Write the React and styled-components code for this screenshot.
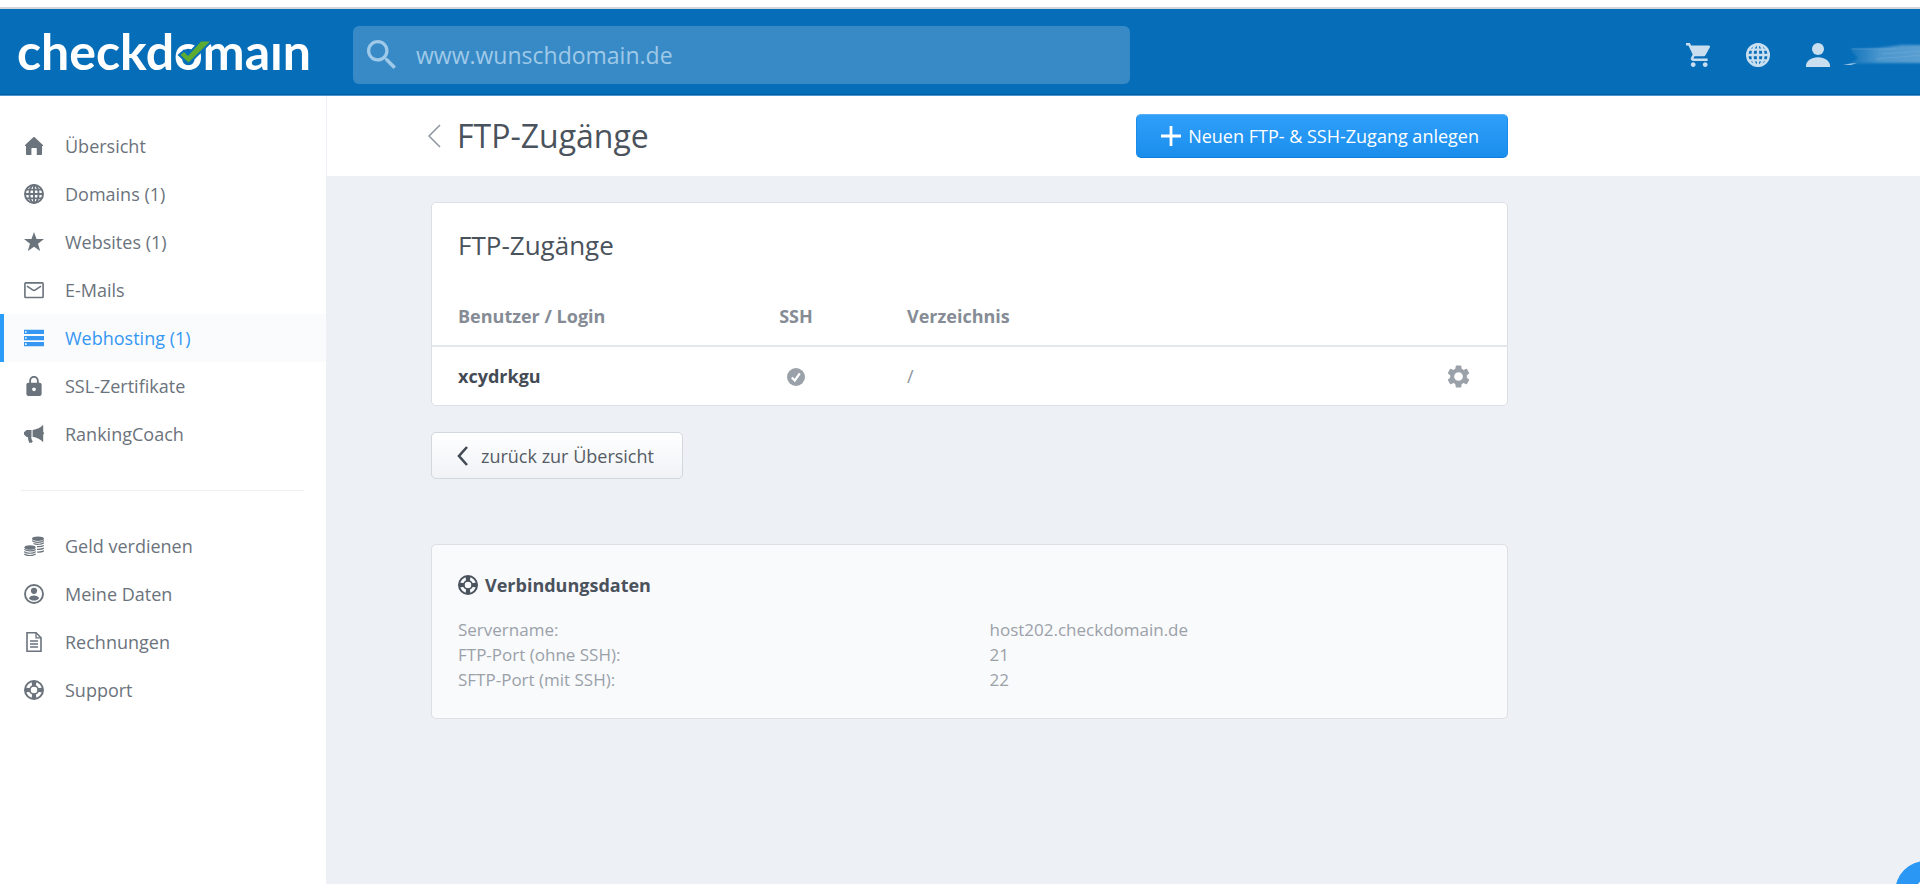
import React from "react";
import styled, { createGlobalStyle } from "styled-components";

const GlobalStyle = createGlobalStyle`
  * {
    box-sizing: border-box;
  }
  body {
    margin: 0;
    background: #edf0f5;
    color: #6b737c;
    font-family: "Open Sans", "Noto Sans", sans-serif;
    font-size: 18px;
    line-height: 24px;
  }
`;

const Page = styled.div`
  display: flex;
  flex-direction: column;
  min-height: 100vh;
  padding-top: 7px;
  background: #fff;
`;

const Topbar = styled.header`
  display: flex;
  align-items: center;
  height: 89px;
  padding-top: 5px;
  border-top: 2px solid #d3d6db;
  border-bottom: 1px solid #4a97d0;
  background: #066eb8;
  box-shadow: inset 0 -1px 0 #0560a4;
`;

const LogoLink = styled.a`
  flex: none;
  width: 353px;
  padding-left: 16px;
  line-height: 0;
`;

const LogoText = styled.text`
  fill: #fff;
  font-family: Lato, sans-serif;
  font-size: 50px;
  font-weight: 700;
`;

const Search = styled.label`
  display: flex;
  align-items: center;
  gap: 20px;
  flex: 0 1 777px;
  height: 58px;
  padding: 0 14px;
  border-radius: 6px;
  background: #388ac6;
  color: #9fc9e8;
`;

const SearchInput = styled.input`
  flex: 1;
  min-width: 0;
  padding: 0;
  border: 0;
  outline: 0;
  background: none;
  color: #fff;
  font: inherit;
  font-size: 23px;
  &::placeholder {
    color: #9fc9e8;
    opacity: 1;
  }
`;

const TopActions = styled.div`
  display: flex;
  align-items: center;
  gap: 36px;
  margin-left: auto;
`;

const IconButton = styled.button`
  display: flex;
  align-items: center;
  padding: 0;
  border: 0;
  background: none;
  color: ${(props) => props.$color || "#c9dff0"};
  cursor: pointer;
`;

const UserButton = styled(IconButton)`
  gap: 12px;
`;

const Body = styled.div`
  display: flex;
  flex: 1;
`;

const Sidebar = styled.nav`
  flex: none;
  width: 327px;
  padding-top: 26px;
  border-right: 1px solid #edf0f5;
`;

const NavList = styled.ul`
  margin: 0;
  padding: 0;
  list-style: none;
`;

const NavLink = styled.a`
  display: flex;
  align-items: center;
  gap: 21px;
  height: 48px;
  padding-left: 20px;
  border-left: 4px solid ${(props) => (props.$active ? "#2b9cf7" : "transparent")};
  background: ${(props) => (props.$active ? "#fafbfc" : "none")};
  color: ${(props) => (props.$active ? "#3597f2" : "#6b737c")};
  text-decoration: none;
`;

const Divider = styled.hr`
  height: 1px;
  margin: 32px 22px 31px 21px;
  border: 0;
  background: #edeff2;
`;

const Main = styled.main`
  flex: 1;
  min-width: 0;
  background: #edf0f5;
`;

const PageHead = styled.div`
  padding: 0 24px 0 101px;
  background: #fff;
`;

const PageHeadInner = styled.div`
  display: flex;
  align-items: center;
  justify-content: space-between;
  max-width: 1080px;
  height: 80px;
`;

const PageTitle = styled.h1`
  display: flex;
  align-items: center;
  gap: 16px;
  margin: 0;
  color: #4a525c;
  font-size: 32px;
  font-weight: 400;
  line-height: 44px;
`;

const BackLink = styled.a`
  display: flex;
  color: #8d949d;
`;

const PrimaryButton = styled.button`
  display: flex;
  align-items: center;
  gap: 7px;
  height: 44px;
  padding: 0 28px 0 24px;
  border: 1px solid #1c8cec;
  border-top-color: #56aff8;
  border-bottom-color: #0c7ee0;
  border-radius: 5px;
  background: linear-gradient(#2f9ffa, #1a8eec);
  color: #fff;
  font: inherit;
  cursor: pointer;
`;

const Content = styled.div`
  max-width: 1205px;
  padding: 26px 24px 40px 104px;
`;

const Card = styled.section`
  border: 1px solid #dcdfe4;
  border-radius: 5px;
  background: ${(props) => (props.$muted ? "#f9fafc" : "#fff")};
`;

const CardTitle = styled.h2`
  margin: 0;
  padding: 23px 26px 25px;
  color: #4a525c;
  font-size: 26px;
  font-weight: 400;
  line-height: 38px;
`;

const Table = styled.table`
  width: 100%;
  border-collapse: collapse;
  table-layout: fixed;
`;

const HeadCell = styled.th`
  width: ${(props) => props.$width || "auto"};
  height: 57px;
  padding: 0 26px 2px;
  border-bottom: 2px solid #e4e7ea;
  color: #858c95;
  font-weight: 700;
  text-align: ${(props) => props.$align || "left"};
`;

const Cell = styled.td`
  height: 59px;
  padding: 0 26px;
  color: ${(props) => (props.$strong ? "#444b54" : "#8d949c")};
  font-weight: ${(props) => (props.$strong ? 700 : 400)};
  text-align: ${(props) => props.$align || "left"};
`;

const Centered = styled.div`
  display: flex;
  justify-content: ${(props) => props.$justify || "center"};
  padding: 0 ${(props) => (props.$justify ? "11px" : "0")} 0 0;
`;

const SecondaryButton = styled.button`
  display: flex;
  align-items: center;
  gap: 12px;
  height: 47px;
  margin: 26px 0 65px;
  padding: 0 28px 0 24px;
  border: 1px solid #d3d7de;
  border-radius: 5px;
  background: linear-gradient(#fff, #f0f2f6);
  color: #555c65;
  font: inherit;
  cursor: pointer;
`;

const InfoBody = styled.div`
  padding: 26px;
`;

const InfoTitle = styled.h3`
  display: flex;
  align-items: center;
  gap: 7px;
  margin: 0 0 18px;
  color: #4a525c;
  font-size: 18px;
  font-weight: 700;
  line-height: 28px;
`;

const InfoList = styled.dl`
  display: grid;
  grid-template-columns: 1fr 1fr;
  column-gap: 40px;
  margin: 0;
  color: #9ba1a9;
  font-size: 17px;
  line-height: 25px;
`;

const InfoValue = styled.dd`
  margin: 0;
`;

const ChatButton = styled.button`
  position: fixed;
  right: -37px;
  bottom: -39px;
  display: flex;
  align-items: center;
  justify-content: center;
  width: 62px;
  height: 62px;
  border: 0;
  border-radius: 50%;
  background: #2997f3;
  color: #fff;
  cursor: pointer;
`;

function Svg({ size = 20, width, height, box = "0 0 20 20", children }) {
  return (
    <svg
      width={width || size}
      height={height || size}
      viewBox={box}
      fill="currentColor"
      aria-hidden="true"
    >
      {children}
    </svg>
  );
}

function GlobeIcon({ size }) {
  return (
    <Svg size={size}>
      <g fill="none" stroke="currentColor" strokeWidth="1.9">
        <circle cx="10" cy="10" r="9" strokeWidth="2" />
        <ellipse cx="10" cy="10" rx="4.6" ry="9" />
        <path d="M10 1v18M1 10h18M2.5 5.600h15M2.5 14.400h15" />
      </g>
    </Svg>
  );
}

function SupportIcon() {
  return (
    <Svg>
      <g fill="none" stroke="currentColor">
        <circle cx="10" cy="10" r="9" strokeWidth="2" />
        <circle cx="10" cy="10" r="4.2" strokeWidth="1.8" />
      </g>
      <path d="M7.500 1.200h5l-.7 5h-3.600zM7.500 18.800h5l-.7-5h-3.600zM1.200 7.500v5l5-.7v-3.600zM18.800 7.500v5l-5-.7v-3.600z" />
    </Svg>
  );
}

function HomeIcon() {
  return (
    <Svg>
      <path d="M9.3 1.3a1 1 0 0 1 1.4 0l8.2 7.6c.4.4.2 1-.4 1H18v8.3c0 .5-.4.8-.8.8h-4.400v-6.200c0-.5-.3-.8-.8-.8H8.200c-.5 0-.8.3-.8.8V19H2.800c-.5 0-.8-.3-.8-.8V9.900h-.5c-.6 0-.8-.6-.4-1z" />
    </Svg>
  );
}

function StarIcon() {
  return (
    <Svg>
      <path d="M10 0l2.5 7.100H20l-6 4.700L16.200 19 10 14.700 3.800 19 6 11.800 0 7.100h7.500z" />
    </Svg>
  );
}

function MailIcon() {
  return (
    <Svg>
      <g fill="none" stroke="currentColor" strokeWidth="1.6" strokeLinejoin="round">
        <rect x="0.9" y="2.9" width="18.2" height="14.6" rx="0.8" />
        <path d="M3 6.200l5.600 3.700q1.400.9 2.800 0L17 6.200" />
      </g>
    </Svg>
  );
}

function ServerIcon() {
  return (
    <Svg box="2 2 20 20">
      <path
        fillRule="evenodd"
        d="M2 20.300h20v-4.300H2v4.300zm1-3h1.600v1.600H3zM2 3.800V8h20V3.800H2zm2.600 3H3V5.200h1.600zM2 14.200h20V9.900H2v4.300zm1-3h1.600v1.600H3z"
      />
    </Svg>
  );
}

function LockIcon() {
  return (
    <Svg box="2 1 20 21">
      <path d="M18 8h-1V6c0-2.760-2.240-5-5-5S7 3.240 7 6v2H6c-1.100 0-2 .9-2 2v10c0 1.100.9 2 2 2h12c1.100 0 2-.9 2-2V10c0-1.100-.9-2-2-2zm-6 9c-1.100 0-2-.9-2-2s.9-2 2-2 2 .9 2 2-.9 2-2 2zm3.100-9H8.900V6c0-1.710 1.390-3.100 3.100-3.100s3.100 1.390 3.100 3.100v2z" />
    </Svg>
  );
}

function MegaphoneIcon() {
  return (
    <Svg>
      <path d="M19.200.8v7.100c.5.2.8.700.8 1.300s-.3 1.100-.8 1.300v7.700C16.500 15.600 13 13.300 8.600 12.800V6C13 5.600 16.500 3.500 19.200.8z" />
      <path d="M7.500 6v6.800l-.3.200c.1 1.700.8 3.400 1.600 4.600l-1.200 1.200H5.200C4.500 16.900 4 15 3.800 12.900H2.600L0 10.600V8.200L2.600 6z" />
    </Svg>
  );
}

function CoinsIcon() {
  return (
    <Svg>
      <ellipse cx="14" cy="2.700" rx="6" ry="2.300" />
      <ellipse cx="6" cy="11.500" rx="5.600" ry="2.300" />
      <g fill="none" stroke="currentColor" strokeWidth="1.200">
        <path d="M8.300 4.700c1.600 2 9 2.300 11.500-.2M9.500 7.500c3 1.300 8 1 10.300-.7M13 10.600c2.800.2 5.500-.2 6.800-1.200M13 13.300c2.800.2 5.500-.2 6.800-1.200M13 16c2.800.2 5.500-.2 6.800-1.200" />
        <path d="M.3 13.300c2 2.200 9.400 2.200 11.400 0M.3 15.600c2 2.200 9.400 2.200 11.400 0M.3 17.900c2 2.200 9.400 2.200 11.400 0" />
      </g>
    </Svg>
  );
}

function AccountIcon() {
  return (
    <Svg>
      <circle cx="10" cy="10" r="9" fill="none" stroke="currentColor" strokeWidth="1.900" />
      <circle cx="10" cy="6.800" r="3.100" />
      <path d="M4.800 14.200c1.200-2.200 3.200-2.800 5.200-2.800s4 .6 5.200 2.800c-1.200 1.600-3 2.400-5.200 2.400s-4-.8-5.200-2.400z" />
    </Svg>
  );
}

function DocumentIcon() {
  return (
    <Svg>
      <g fill="none" stroke="currentColor" strokeWidth="1.600">
        <path d="M3 .8h9l5 5v13.400H3z" />
        <path d="M12 .8v5h5M6 9h8M6 12h8M6 15h8" strokeWidth="1.300" />
      </g>
    </Svg>
  );
}

function Logo() {
  return (
    <svg width="310" height="76" viewBox="0 0 310 76" role="img" aria-label="checkdomain">
      <LogoText x="1" y="53">
        checkdomaın
      </LogoText>
      <path
        d="M164.500 38l3.500-3 4 4L185 24.500h9L172.500 45.500z"
        fill="#066eb8"
        stroke="#066eb8"
        strokeWidth="4"
      />
      <path d="M164.500 38l3.500-3 4 4L185 24.500h9L172.500 45.500z" fill="#5dab30" />
    </svg>
  );
}

// customer name, smudged out
function HiddenName() {
  return (
    <svg width="78" height="24" viewBox="0 0 78 24" aria-hidden="true">
      <defs>
        <linearGradient id="smudge" x1="0" x2="1">
          <stop offset="0" stopColor="#3b8dc9" stopOpacity="0.3" />
          <stop offset="0.4" stopColor="#4b97ce" />
          <stop offset="1" stopColor="#5b9fd2" />
        </linearGradient>
        <filter id="soft">
          <feGaussianBlur stdDeviation="1" />
        </filter>
      </defs>
      <path d="M8 6L36 5 60 2h22v18H30L8 21l8-6z" fill="url(#smudge)" filter="url(#soft)" />
      <path d="M1 22q8-2 14-2l-6 2z" fill="#9dc6e5" />
      <path d="M10 6h45M40 11l40-3M34 16l46-4" stroke="#73add9" strokeOpacity="0.5" />
    </svg>
  );
}

const mainNav = [
  { label: "Übersicht", icon: HomeIcon },
  { label: "Domains (1)", icon: GlobeIcon },
  { label: "Websites (1)", icon: StarIcon },
  { label: "E-Mails", icon: MailIcon },
  { label: "Webhosting (1)", icon: ServerIcon, active: true },
  { label: "SSL-Zertifikate", icon: LockIcon },
  { label: "RankingCoach", icon: MegaphoneIcon },
];

const accountNav = [
  { label: "Geld verdienen", icon: CoinsIcon },
  { label: "Meine Daten", icon: AccountIcon },
  { label: "Rechnungen", icon: DocumentIcon },
  { label: "Support", icon: SupportIcon },
];

const connection = [
  ["Servername:", "host202.checkdomain.de"],
  ["FTP-Port (ohne SSH):", "21"],
  ["SFTP-Port (mit SSH):", "22"],
];

function NavGroup({ items }) {
  return (
    <NavList>
      {items.map(({ label, icon: Icon, active }) => (
        <li key={label}>
          <NavLink href="#" $active={active} aria-current={active ? "page" : undefined}>
            <Icon />
            {label}
          </NavLink>
        </li>
      ))}
    </NavList>
  );
}

function Header() {
  return (
    <Topbar>
      <LogoLink href="#">
        <Logo />
      </LogoLink>
      <Search>
        <Svg size={29} box="3 3 17.500 17.500">
          <path d="M15.500 14h-.79l-.28-.27C15.410 12.590 16 11.110 16 9.500 16 5.910 13.090 3 9.500 3S3 5.910 3 9.500 5.910 16 9.500 16c1.610 0 3.090-.59 4.230-1.570l.27.28v.79l5 4.990L20.490 19l-4.990-5zm-6 0C7.010 14 5 11.990 5 9.500S7.010 5 9.500 5 14 7.010 14 9.500 11.990 14 9.500 14z" />
        </Svg>
        <SearchInput type="text" placeholder="www.wunschdomain.de" aria-label="Domain suchen" />
      </Search>
      <TopActions>
        <IconButton aria-label="Warenkorb">
          <Svg size={24} box="1 2 20 20">
            <path d="M7 18c-1.100 0-1.990.9-1.990 2S5.900 22 7 22s2-.9 2-2-.9-2-2-2zM1 2v2h2l3.600 7.590-1.350 2.450c-.16.28-.25.61-.25.96 0 1.100.9 2 2 2h12v-2H7.420c-.14 0-.25-.11-.25-.25l.03-.12.9-1.630h7.450c.75 0 1.410-.41 1.750-1.030l3.580-6.490A1 1 0 0 0 20 4H5.210l-.94-2H1zm16 16c-1.100 0-1.990.9-1.990 2s.89 2 1.990 2 2-.9 2-2-.9-2-2-2z" />
          </Svg>
        </IconButton>
        <IconButton aria-label="Sprache">
          <GlobeIcon size={24} />
        </IconButton>
        <UserButton aria-label="Benutzerkonto">
          <Svg size={24} box="4 4 16 16">
            <circle cx="12" cy="8" r="4" />
            <path d="M12 13.500c-4.500 0-8 2.600-8 5.500v1h16v-1c0-2.900-3.500-5.500-8-5.500z" />
          </Svg>
          <HiddenName />
        </UserButton>
      </TopActions>
    </Topbar>
  );
}

export default function App() {
  return (
    <>
      <GlobalStyle />
      <Page>
        <Header />
        <Body>
          <Sidebar>
            <NavGroup items={mainNav} />
            <Divider />
            <NavGroup items={accountNav} />
          </Sidebar>
          <Main>
            <PageHead>
              <PageHeadInner>
                <PageTitle>
                  <BackLink href="#" aria-label="Zurück">
                    <Svg width={13} height={24} box="0 0 13 24">
                      <path d="M12 1L1 12l11 11" fill="none" stroke="currentColor" strokeWidth="1.500" />
                    </Svg>
                  </BackLink>
                  FTP-Zugänge
                </PageTitle>
                <PrimaryButton>
                  <Svg>
                    <path d="M10 0v20M0 10h20" stroke="currentColor" strokeWidth="2.800" />
                  </Svg>
                  Neuen FTP- &amp; SSH-Zugang anlegen
                </PrimaryButton>
              </PageHeadInner>
            </PageHead>
            <Content>
              <Card>
                <CardTitle>FTP-Zugänge</CardTitle>
                <Table>
                  <thead>
                    <tr>
                      <HeadCell $width="279px">Benutzer / Login</HeadCell>
                      <HeadCell $width="170px" $align="center">SSH</HeadCell>
                      <HeadCell>Verzeichnis</HeadCell>
                      <HeadCell $width="120px" />
                    </tr>
                  </thead>
                  <tbody>
                    <tr>
                      <Cell $strong>xcydrkgu</Cell>
                      <Cell>
                        <Centered>
                          <Svg>
                            <circle cx="10" cy="11" r="9" fill="#9ba1a9" />
                            <path d="M5.800 11.500l3 3L13.800 7.300" fill="none" stroke="#fff" strokeWidth="2.200" />
                          </Svg>
                        </Centered>
                      </Cell>
                      <Cell>/</Cell>
                      <Cell>
                        <Centered $justify="flex-end">
                          <IconButton $color="#9ba1a9" aria-label="Einstellungen">
                            <Svg size={23} box="2 2 20 20">
                              <path d="M19.140 12.940c.04-.3.060-.61.060-.94s-.02-.64-.07-.94l2.030-1.580c.18-.14.230-.41.120-.61l-1.920-3.320c-.12-.22-.37-.29-.59-.22l-2.390.96c-.5-.38-1.030-.7-1.620-.94l-.36-2.540c-.04-.24-.24-.41-.48-.41h-3.840c-.24 0-.43.170-.47.410l-.36 2.540c-.59.240-1.130.570-1.620.940l-2.390-.96c-.22-.08-.47 0-.59.220L2.740 8.870c-.12.210-.08.470.12.610l2.030 1.580c-.05.3-.09.630-.09.940s.02.640.070.940l-2.030 1.580c-.18.140-.23.410-.12.610l1.920 3.320c.12.220.37.290.59.220l2.390-.96c.5.380 1.030.7 1.620.94l.36 2.540c.05.240.24.410.48.410h3.840c.24 0 .44-.17.470-.41l.36-2.540c.59-.24 1.130-.56 1.620-.94l2.390.96c.22.080.47 0 .59-.22l1.920-3.320c.12-.22.070-.47-.12-.61l-2.010-1.580zM12 15.800A3.800 3.800 0 1 1 12 8.200a3.800 3.800 0 0 1 0 7.600z" />
                            </Svg>
                          </IconButton>
                        </Centered>
                      </Cell>
                    </tr>
                  </tbody>
                </Table>
              </Card>
              <SecondaryButton>
                <Svg width={13} height={20} box="0 0 13 20">
                  <path d="M11 1L3 10l8 9" fill="none" stroke="#444b54" strokeWidth="2.600" />
                </Svg>
                zurück zur Übersicht
              </SecondaryButton>
              <Card $muted>
                <InfoBody>
                  <InfoTitle>
                    <SupportIcon />
                    Verbindungsdaten
                  </InfoTitle>
                  <InfoList>
                    {connection.map(([name, value]) => (
                      <React.Fragment key={name}>
                        <dt>{name}</dt>
                        <InfoValue>{value}</InfoValue>
                      </React.Fragment>
                    ))}
                  </InfoList>
                </InfoBody>
              </Card>
            </Content>
          </Main>
        </Body>
      </Page>
      <ChatButton aria-label="Hilfe">
        <Svg size={24}>
          <path d="M4 6a6 5.500 0 1 1 8 5.500c-2 1-2 1.500-2 3.500" fill="none" stroke="currentColor" strokeWidth="2.500" />
        </Svg>
      </ChatButton>
    </>
  );
}
